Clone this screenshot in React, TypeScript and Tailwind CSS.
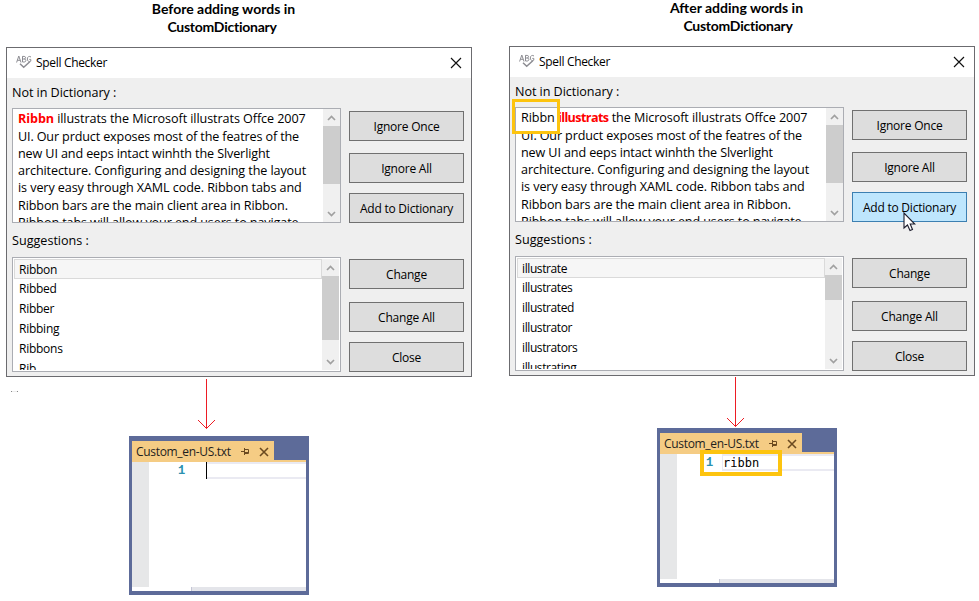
import React from "react";

type DialogProps = {
  lines: React.ReactNode[];
  suggestions: string[];
  thumb: string;
  listTracking: string;
  activeAdd?: boolean;
};

const bodyRest = [
  "UI. Our prduct exposes most of the featres of the",
  "new UI and eeps intact winhth the Slverlight",
  "architecture. Configuring and designing the layout",
  "is very easy through XAML code. Ribbon tabs and",
  "Ribbon bars are the main client area in Ribbon.",
  "Ribbon tabs will allow your end users to navigate",
];

const lineStyles = [
  "h-[18px] tracking-[-0.08px]",
  "h-[17px] tracking-[-0.14px]",
  "h-[17px] tracking-[-0.12px]",
  "h-[17px] tracking-[-0.1px]",
  "h-[18px] tracking-[-0.09px]",
  "h-[17px] tracking-[-0.12px]",
  "h-[17px] tracking-[-0.11px]",
];

function Chevron({ down = false }: { down?: boolean }) {
  return (
    <svg width="17" height="17" viewBox="0 0 17 17" className="block shrink-0" fill="none" stroke="#a0a0a0" strokeWidth="1.7">
      <path d={down ? "M5 7 L8.5 10.5 L12 7" : "M5 11 L8.5 7.5 L12 11"} />
    </svg>
  );
}

function ScrollBar({ thumb }: { thumb: string }) {
  return (
    <div className="flex w-[17px] shrink-0 flex-col bg-[#f0f0f0]">
      <Chevron />
      <div className={"w-full bg-[#cdcdcd] " + thumb} />
      <div className="flex-1" />
      <Chevron down />
    </div>
  );
}

function DialogButton({ label, active = false }: { label: string; active?: boolean }) {
  return (
    <button
      className={
        "flex h-[30px] w-[115px] items-center justify-center border pt-[2px] text-[12px] leading-[18px] tracking-[-0.22px] whitespace-nowrap " +
        (active ? "border-[#3c7fb1] bg-[#bee6fd]" : "border-[#707070] bg-[#dddddd]")
      }
    >
      {label}
    </button>
  );
}

function Cursor() {
  return (
    <svg width="13" height="20" viewBox="0 0 13 20" className="absolute top-[165px] left-[393px]">
      <path d="M1 1 V16 L4.5 13 L7 18.5 L9.5 17.5 L7.2 12 H11.8 Z" fill="#fff" stroke="#1c1c2c" strokeWidth="1.1" />
    </svg>
  );
}

function SpellIcon() {
  return (
    <svg width="17" height="15" viewBox="0 0 17 15" fill="none" stroke="#8c8c92" strokeWidth="1" className="-mt-px block">
      <path d="M0.6 7.5 L2.8 1 L5 7.5 M1.4 5.3 H4.2" />
      <path d="M6.5 1.3 V7 M6.5 1.4 H8.2 C10 1.4 10 4 8.2 4 H6.5 M8.2 4 C10.4 4 10.4 7 8.2 7 H6.5" />
      <path d="M15 2 C13.3 0.7 11.3 1.7 11.3 4 C11.3 6.3 13.1 7 14.8 6.2 V4.4 H13.3" />
      <path d="M4 8.8 L7.7 12.3 L13.8 6.8" strokeWidth="1.5" />
    </svg>
  );
}

function SpellDialog({ lines, suggestions, thumb, listTracking, activeAdd = false }: DialogProps) {
  return (
    <section className="relative ml-[6px] h-[330px] w-[466px] border border-[#6b6b6f] bg-[#efefef]">
      <header className="flex h-[30px] items-center bg-white pr-[9px] pl-[9px]">
        <SpellIcon />
        <h2 className="ml-[3px] flex-1 text-[12px] leading-[18px] tracking-[-0.32px]">Spell Checker</h2>
        <svg width="12" height="12" viewBox="0 0 12 12" stroke="#111" strokeWidth="1.15" className="-mt-px block">
          <path d="M1 1 L11 11 M11 1 L1 11" />
        </svg>
      </header>
      <div className="flex pl-[5px]">
        <div className="w-[329px]">
          <div className="h-[30px] pt-[6px] text-[12.6px] leading-[18px] tracking-[-0.06px]">Not in Dictionary :</div>
          <div className="flex h-[115px] overflow-hidden border border-[#abadb3] bg-white">
            <div className="w-[310px] shrink-0 pt-px pl-[5px] text-[12.6px] leading-[18px] whitespace-nowrap">
              {lines.map((line, i) => (
                <div key={i} className={lineStyles[i]}>
                  {line}
                </div>
              ))}
            </div>
            <ScrollBar thumb="h-[58px]" />
          </div>
          <div className="h-[34px] pt-[9px] text-[12.6px] leading-[18px]">Suggestions :</div>
          <div className="flex h-[115px] border border-[#abadb3] bg-white p-px">
            <ul className={"h-[111px] w-[308px] overflow-hidden text-[12px] leading-[20px] " + listTracking}>
              {suggestions.map((word, i) => (
                <li
                  key={word}
                  className={
                    i === 0
                      ? "h-[20px] border border-[#dadada] bg-[#f6f6f6] pl-[4px]"
                      : "h-[20px] pl-[5px]"
                  }
                >
                  {word}
                </li>
              ))}
            </ul>
            <ScrollBar thumb={thumb} />
          </div>
        </div>
        <div className="ml-[8px] flex flex-col pt-[33px]">
          <DialogButton label="Ignore Once" />
          <div className="h-[12px]" />
          <DialogButton label="Ignore All" />
          <div className="h-[10px]" />
          <DialogButton label="Add to Dictionary" active={activeAdd} />
          <div className="h-[36px]" />
          <DialogButton label="Change" />
          <div className="h-[13px]" />
          <DialogButton label="Change All" />
          <div className="h-[10px]" />
          <DialogButton label="Close" />
        </div>
      </div>
      {activeAdd && (
        <>
          <div className="absolute top-[52px] left-[2px] h-[35px] w-[48px] border-3 border-[#fdc40f]" />
          <Cursor />
        </>
      )}
    </section>
  );
}

function Arrow({ className }: { className: string }) {
  return (
    <svg width="19" height="51" viewBox="0 0 19 51" className={"block " + className} fill="none" stroke="#ed1c24" strokeWidth="1">
      <path d="M9.5 0 V49.5 M1 41 L9.5 49.5 L18 41" />
    </svg>
  );
}

function Editor({ text, className }: { text?: string; className: string }) {
  return (
    <section className={"relative h-[159px] w-[180px] bg-[#5d6b99] px-[3px] pt-[5px] pb-[4px] " + className}>
      <div className="flex h-[19px] w-[142px] items-center bg-[#f5cc84] pl-[4px] text-[12px] text-[#1e1e1e]">
        <span className="w-[105px] pt-[3px] leading-[18px] tracking-[-0.32px] whitespace-nowrap">Custom_en-US.txt</span>
        <svg width="9" height="9" viewBox="0 0 9 9" className="mt-[2px] block" fill="none" stroke="#6b4a20" strokeWidth="1">
          <path d="M0 4.5 H3 M3.5 1 V8 M3.5 2.5 H7.5 V6.5 H3.5 M3.5 5.5 H7.5" />
        </svg>
        <svg width="10" height="10" viewBox="0 0 10 10" className="mt-[2px] ml-[9px] block" stroke="#6b4a20" strokeWidth="1.6">
          <path d="M1 1 L9 9 M9 1 L1 9" />
        </svg>
      </div>
      <div className="h-[2px] bg-[#f5cc84]" />
      <div className="flex h-[125px] bg-white">
        <div className="w-[17px] bg-[#e6e7e8]" />
        <div
          className={
            "pt-px pl-[29px] font-['Liberation_Mono',monospace] text-[12px] leading-[16px] font-bold text-[#2b91af] " +
            (text ? "w-[45px]" : "w-[57px]")
          }
        >
          1
        </div>
        <div className="h-[17px] flex-1 border-y-2 border-l border-y-[#eaeaf2] border-l-[#eaeaf2]">
          {text ? (
            <span className="block pt-px font-['DejaVu_Sans_Mono',monospace] text-[12px] leading-[13px] text-black">{text}</span>
          ) : (
            <span className="-mt-[2px] -ml-px block h-[17px] w-px bg-black" />
          )}
        </div>
      </div>
      <div className="flex h-[4px] bg-[#e4e5ea]">
        <div className="w-[60px] border-r border-[#c5c6d5] bg-white" />
      </div>
      {text && <div className="absolute top-[22px] left-[43px] h-[26px] w-[82px] border-4 border-[#fdc40f]" />}
    </section>
  );
}

export default function App() {
  return (
    <main className="flex h-[601px] w-[979px] items-start overflow-hidden bg-white font-['Open_Sans','Noto_Sans',sans-serif] text-black">
      <div className="w-[503px] shrink-0">
        <h1 className="h-[47px] w-[447px] text-center font-['Lato',sans-serif] text-[14px] leading-[18px] font-bold">
          Before adding words in
          <br />
          <span className="mr-[3px] tracking-[-0.25px]">CustomDictionary</span>
        </h1>
        <SpellDialog
          lines={[
            <>
              <b className="text-[#ff0000]">Ribbn</b> illustrats the Microsoft illustrats Offce 2007
            </>,
            ...bodyRest,
          ]}
          suggestions={["Ribbon", "Ribbed", "Ribber", "Ribbing", "Ribbons", "Rib"]}
          listTracking="tracking-[-0.25px]"
          thumb="h-[64px]"
        />
        <div className="flex h-[59px] pt-[2px]">
          <span className="mt-[12px] ml-[11px] h-px w-[7px] border-x border-[#888] bg-[#eee]" />
          <Arrow className="ml-[179px]" />
        </div>
        <Editor className="ml-[129px]" />
      </div>
      <div className="-mt-px w-[476px] shrink-0">
        <h1 className="h-[47px] w-[467px] text-center font-['Lato',sans-serif] text-[14px] leading-[18px] font-bold">
          After adding words in
          <br />
          <span className="ml-[3px] tracking-[-0.25px]">CustomDictionary</span>
        </h1>
        <SpellDialog
          activeAdd
          lines={[
            <>
              Ribbn <b className="tracking-[-0.6px] text-[#ff0000]">illustrats</b> the Microsoft illustrats Offce 2007
            </>,
            ...bodyRest,
          ]}
          suggestions={["illustrate", "illustrates", "illustrated", "illustrator", "illustrators", "illustrating"]}
          listTracking="tracking-[-0.4px]"
          thumb="h-[25px]"
        />
        <div className="h-[52px] pt-px">
          <Arrow className="ml-[223px]" />
        </div>
        <Editor className="ml-[154px]" text="ribbn" />
      </div>
    </main>
  );
}
